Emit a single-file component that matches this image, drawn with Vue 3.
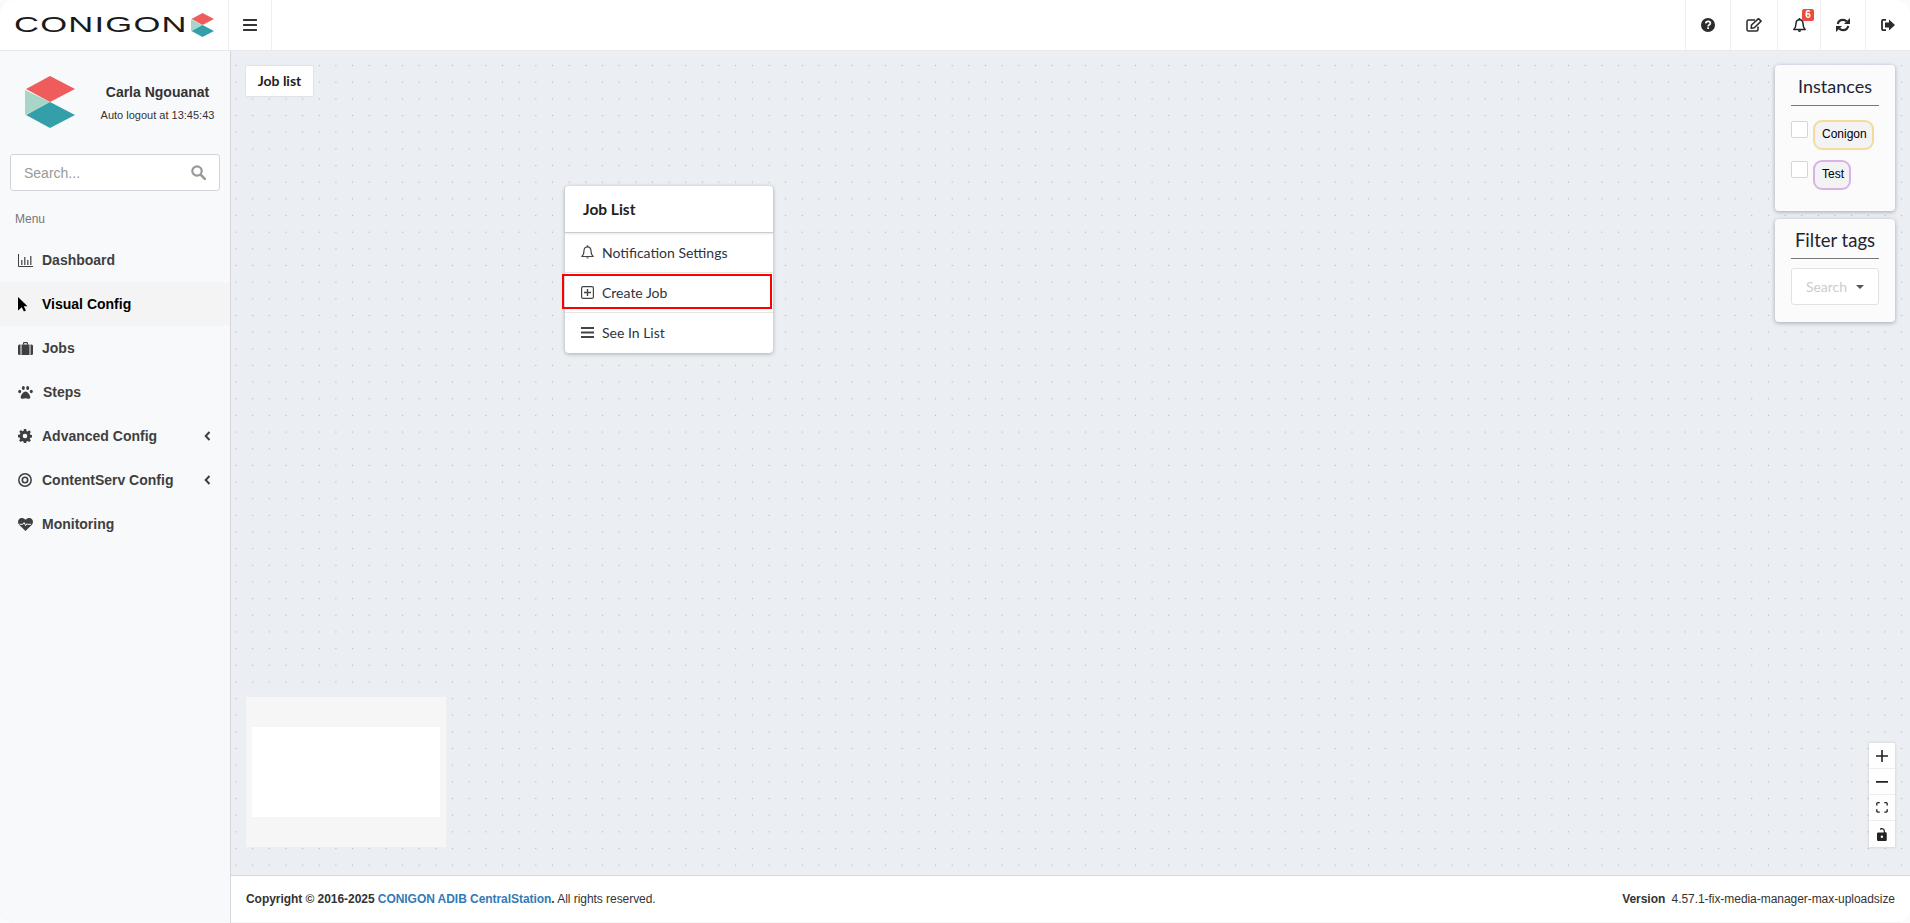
<script setup>
const navItems = [
  { label: 'Dashboard', icon: 'chart' },
  { label: 'Visual Config', icon: 'pointer', active: true },
  { label: 'Jobs', icon: 'suitcase' },
  { label: 'Steps', icon: 'paw', gap: true },
  { label: 'Advanced Config', icon: 'cog', arrow: true },
  { label: 'ContentServ Config', icon: 'target', arrow: true },
  { label: 'Monitoring', icon: 'heart' }
]
const topIcons = [
  { id: 'help', w: 45 },
  { id: 'edit', w: 47 },
  { id: 'bell', w: 43, badge: 6 },
  { id: 'refresh', w: 45 },
  { id: 'logout', w: 45 }
]
</script>

<template>
  <div class="app">
    <svg width="0" height="0" class="defs" aria-hidden="true">
      <defs>
        <symbol id="logo-mark" viewBox="0 0 50 52">
          <path d="M25 0 50 13 25 26 1 13z" fill="#ef5c5c" />
          <path d="M0 14 25 26 0 39z" fill="#a9d5c8" />
          <path d="M25 26 50 39 25 52 1 39z" fill="#33a0a9" />
        </symbol>
      </defs>
    </svg>

    <header class="topbar">
      <div class="brand">
        <span class="wordmark">CONIGON</span>
        <svg class="brand-mark"><use href="#logo-mark" /></svg>
      </div>
      <button class="toggle">
        <svg width="14" height="12" viewBox="0 0 14 12"><path d="M1 0h12.200a.8.8 0 0 1 0 2H.8a.8.8 0 0 1 0-2zm0 5h12.200a.8.8 0 0 1 0 2H.8a.8.8 0 0 1 0-2zm0 5h12.200a.8.8 0 0 1 0 2H.8a.8.8 0 0 1 0-2z" fill="#333" /></svg>
      </button>
      <div class="top-actions">
        <div v-for="t in topIcons" :key="t.id" class="top-action" :style="{ width: t.w + 'px' }">
          <svg v-if="t.id === 'help'" width="14" height="14" viewBox="0 0 14 14">
            <circle cx="7" cy="7" r="7" fill="#2b2b2b" />
            <path d="M4.700 5.300C4.900 4 5.900 3.400 7.100 3.400c1.300 0 2.300.8 2.300 1.900 0 1.800-2.300 1.700-2.300 3.100" fill="none" stroke="#fff" stroke-width="1.700" />
            <rect x="6.200" y="9.300" width="1.800" height="1.700" fill="#fff" />
          </svg>
          <svg v-else-if="t.id === 'edit'" width="16" height="14" viewBox="0 0 16 14">
            <path d="M12 8.500V11.500a1.500 1.500 0 0 1-1.500 1.500H2.500A1.500 1.500 0 0 1 1 11.500v-8A1.500 1.500 0 0 1 2.500 2H9" fill="none" stroke="#2b2b2b" stroke-width="1.500" />
            <path d="M5.500 7 12.500.6l2.600 2.500L8.300 9.800l-3.100.5z" fill="none" stroke="#2b2b2b" stroke-width="1.500" stroke-linejoin="round" />
          </svg>
          <svg v-else-if="t.id === 'bell'" width="13" height="15" viewBox="0 0 13 15">
            <path d="M6.500 1.700C4.200 1.700 3 3.300 3 5.500c0 3-1 4.800-2.200 6h11.400C11 10.300 10 8.500 10 5.500c0-2.200-1.200-3.800-3.500-3.800z" fill="none" stroke="#222" stroke-width="1.500" stroke-linejoin="round" />
            <circle cx="6.500" cy="1" r="1" fill="#222" />
            <path d="M4.800 12.300a1.700 1.700 0 0 0 3.400 0z" fill="#222" />
          </svg>
          <svg v-else-if="t.id === 'refresh'" width="14" height="14" viewBox="0 0 14 14">
            <path d="M1.800 6C2.300 3.500 4.400 1.900 7 1.900c1.500 0 2.800.6 3.700 1.500" fill="none" stroke="#2b2b2b" stroke-width="2.200" />
            <path d="M14 0v6H8z" fill="#2b2b2b" />
            <path d="M12.200 8C11.700 10.500 9.600 12.100 7 12.100c-1.500 0-2.800-.6-3.700-1.500" fill="none" stroke="#2b2b2b" stroke-width="2.200" />
            <path d="M0 14V8h6z" fill="#2b2b2b" />
          </svg>
          <svg v-else width="14" height="12" viewBox="0 0 14 12">
            <path d="M5 .8H2.500A1.500 1.500 0 0 0 1 2.300v7.400a1.500 1.500 0 0 0 1.500 1.500H5" fill="none" stroke="#2b2b2b" stroke-width="1.800" />
            <path d="M8 .5 14 6l-6 5.500V8.500H4v-5h4z" fill="#2b2b2b" />
          </svg>
          <span v-if="t.badge" class="badge">{{ t.badge }}</span>
        </div>
      </div>
    </header>

    <div class="body">
      <aside class="sidebar">
        <div class="user">
          <svg class="user-mark"><use href="#logo-mark" /></svg>
          <div class="user-info">
            <div class="user-name">Carla Ngouanat</div>
            <div class="user-logout">Auto logout at 13:45:43</div>
          </div>
        </div>
        <div class="search">
          <span class="search-ph">Search...</span>
          <svg width="15" height="15" viewBox="0 0 15 15"><circle cx="6" cy="6" r="4.700" fill="none" stroke="#999" stroke-width="2.200" /><path d="m9.600 9.600 4.200 4.200" stroke="#999" stroke-width="2.600" stroke-linecap="round" /></svg>
        </div>
        <div class="menu-label">Menu</div>
        <nav>
          <a v-for="n in navItems" :key="n.label" class="nav-item" :class="{ active: n.active }">
            <span class="nav-icon">
              <svg v-if="n.icon === 'chart'" width="15" height="13" viewBox="0 0 15 13"><path d="M.5 0v12.500H15" fill="none" stroke="currentColor" /><path d="M3 6h1.500v5H3zM6 3h1.500v8H6zM9 6h1.500v5H9zM12 2h1.500v9H12z" fill="currentColor" opacity=".8" /></svg>
              <svg v-else-if="n.icon === 'pointer'" width="10" height="15" viewBox="0 0 10 15"><path d="M0 0 9.500 9.300H5.800l2.100 4.300-2 1-2.100-4.400L0 13.500z" fill="#000" /></svg>
              <svg v-else-if="n.icon === 'suitcase'" width="15" height="13" viewBox="0 0 15 13"><path d="M5 2.500V1.200C5 .5 5.500 0 6.200 0h2.600C9.500 0 10 .5 10 1.200v1.300h-1V1.200H6v1.300z" fill="currentColor" /><path d="M3.500 2.500h8V13h-8zM2.500 2.500V13H1.500A1.500 1.500 0 0 1 0 11.500V4a1.500 1.500 0 0 1 1.500-1.500zM12.500 2.500h1A1.500 1.500 0 0 1 15 4v7.500a1.500 1.500 0 0 1-1.500 1.500h-1z" fill="currentColor" /></svg>
              <svg v-else-if="n.icon === 'paw'" width="15" height="13" viewBox="0 0 15 13"><ellipse cx="5.300" cy="2" rx="1.500" ry="2" fill="currentColor" /><ellipse cx="9.700" cy="2" rx="1.500" ry="2" fill="currentColor" /><ellipse cx="1.700" cy="5.500" rx="1.500" ry="1.800" fill="currentColor" /><ellipse cx="13.300" cy="5.500" rx="1.500" ry="1.800" fill="currentColor" /><path d="M7.500 5.500c2 0 4.800 3.500 4.800 5.800 0 1.500-1.500 1.700-2.300 1.500-1-.2-1.700-.6-2.500-.6s-1.500.4-2.500.6c-.8.2-2.300 0-2.300-1.500 0-2.300 2.800-5.800 4.800-5.800z" fill="currentColor" /></svg>
              <svg v-else-if="n.icon === 'cog'" width="14" height="14" viewBox="0 0 14 14"><path fill-rule="evenodd" d="M5.800 0h2.400l.3 1.900 1.200.5 1.600-1.100 1.600 1.600-1.100 1.600.5 1.200 1.900.3v2.400l-1.900.3-.5 1.200 1.100 1.600-1.600 1.600-1.600-1.100-1.200.5-.3 1.900H5.800l-.3-1.900-1.200-.5-1.600 1.100-1.600-1.600 1.100-1.600-.5-1.200L0 8.200V5.800l1.900-.3.5-1.200-1.100-1.600 1.600-1.600 1.600 1.100 1.200-.5zM7 4.700a2.300 2.300 0 1 0 0 4.600 2.300 2.300 0 0 0 0-4.600z" fill="currentColor" /></svg>
              <svg v-else-if="n.icon === 'target'" width="14" height="14" viewBox="0 0 14 14"><circle cx="7" cy="7" r="6.200" fill="none" stroke="currentColor" stroke-width="1.500" /><circle cx="7" cy="7" r="2.700" fill="none" stroke="currentColor" stroke-width="1.600" /></svg>
              <svg v-else width="15" height="13" viewBox="0 0 15 13"><path fill-rule="evenodd" d="M7.500 13 1.300 7C-.3 5.300-.4 2.800 1 1.200 2.500-.4 5.500-.3 7.500 1.800 9.500-.3 12.500-.4 14 1.200c1.400 1.600 1.300 4.100-.3 5.800z" fill="currentColor" /><path d="M1.500 6.300h3.300l1.300-1.700 1.500 3 1.300-1.900 .6.600h3.500" fill="none" stroke="#f8f9fb" stroke-width="1" /></svg>
            </span>
            <span class="nav-label" :class="{ 'nav-gap': n.gap }">{{ n.label }}</span>
            <svg v-if="n.arrow" class="nav-arrow" width="7" height="10" viewBox="0 0 7 10"><path d="M5.500 1 1.700 5l3.800 4" fill="none" stroke="currentColor" stroke-width="2" /></svg>
          </a>
        </nav>
      </aside>

      <main class="content">
        <div class="canvas">
          <div class="joblist-btn">Job list</div>

          <div class="node">
            <div class="node-head">Job List</div>
            <div class="node-row">
              <svg width="13" height="15" viewBox="0 0 13 15"><path d="M6.500 2C4.200 2 3 3.600 3 5.700c0 3-1 4.700-2.200 5.800h11.400C11 10.400 10 8.700 10 5.700 10 3.600 8.800 2 6.500 2z" fill="none" stroke="#444" stroke-width="1.200" stroke-linejoin="round" /><circle cx="6.500" cy="1.200" r="1" fill="#444" /><path d="M5 12.500a1.600 1.600 0 0 0 3 0z" fill="#444" /></svg>
              <span>Notification Settings</span>
            </div>
            <div class="node-row highlighted">
              <svg width="13" height="13" viewBox="0 0 13 13"><rect x=".6" y=".6" width="11.800" height="11.800" rx="1.500" fill="none" stroke="#444" stroke-width="1.200" /><path d="M6.500 3v7M3 6.500h7" stroke="#444" stroke-width="1.400" /></svg>
              <span>Create Job</span>
            </div>
            <div class="node-row">
              <svg width="13" height="11" viewBox="0 0 13 11"><path d="M0 0h13v2H0zM0 4.500h13v2H0zM0 9h13v2H0z" fill="#444" /></svg>
              <span>See In List</span>
            </div>
          </div>

          <div class="panels">
            <section class="panel instances">
              <h3>Instances</h3>
              <div class="instance">
                <span class="check"></span>
                <span class="chip chip-gold">Conigon</span>
              </div>
              <div class="instance">
                <span class="check"></span>
                <span class="chip chip-purple">Test</span>
              </div>
            </section>
            <section class="panel filter">
              <h3>Filter tags</h3>
              <div class="select">
                <span>Search</span>
                <i class="caret"></i>
              </div>
            </section>
          </div>

          <div class="minimap"><div class="minimap-view"></div></div>

          <div class="controls">
            <button><svg width="12" height="12" viewBox="0 0 32 32"><path d="M32 18.133H18.133V32h-4.266V18.133H0v-4.266h13.867V0h4.266v13.867H32z" /></svg></button>
            <button><svg width="12" height="2" viewBox="0 0 32 5" preserveAspectRatio="none"><path d="M0 0h32v4.200H0z" /></svg></button>
            <button><svg width="12" height="11" viewBox="0 0 32 30"><path d="M3.692 4.630c0-.53.4-.938.939-.938h5.215V0H4.708C2.130 0 0 2.054 0 4.630v5.216h3.692V4.631zM27.354 0h-5.200v3.692h5.170c.53 0 .984.4.984.939v5.215H32V4.631A4.624 4.624 0 0027.354 0zm.954 24.830c0 .532-.4.94-.939.94h-5.215v3.768h5.215c2.577 0 4.631-2.130 4.631-4.707v-5.139h-3.692v5.139zm-23.677.94c-.531 0-.939-.4-.939-.94v-5.138H0v5.139c0 2.577 2.130 4.707 4.708 4.707h5.138V25.770H4.631z" /></svg></button>
            <button><svg width="10" height="13" viewBox="0 0 25 32"><path d="M21.333 10.667H19.810V7.619C19.810 3.429 16.380 0 12.190 0c-1.523 0-3.047.38-4.370 1.238-.762.572-.952 1.524-.38 2.286.571.762 1.523.952 2.285.38a4.230 4.230 0 012.465-.76c2.476 0 4.571 2.095 4.571 4.571v3.048H3.048A3.056 3.056 0 000 13.714v15.238A3.056 3.056 0 003.048 32h18.285a3.056 3.056 0 003.048-3.048V13.714a3.056 3.056 0 00-3.048-3.047zM12.190 24.533a3.056 3.056 0 01-3.047-3.047 3.056 3.056 0 013.047-3.048 3.056 3.056 0 013.048 3.048 3.056 3.056 0 01-3.048 3.047z" /></svg></button>
          </div>
        </div>

        <footer class="footer">
          <div><b>Copyright © 2016-2025 <a>CONIGON ADIB CentralStation</a>.</b> All rights reserved.</div>
          <div><b class="version">Version</b> 4.57.1-fix-media-manager-max-uploadsize</div>
        </footer>
      </main>
    </div>
  </div>
</template>

<style>
html, body { margin: 0; background: #fbfbfb; }
</style>

<style scoped>
.app {
  width: 100%;
  height: 923px;
  display: flex;
  flex-direction: column;
  overflow: hidden;
  border-radius: 14px;
  background: #f8f9fb;
  box-shadow: inset 0 0 2px rgba(0, 0, 0, .08);
  font-family: "Liberation Sans", Arial, sans-serif;
  color: #333;
}
.defs { position: absolute; }
.topbar {
  height: 50px;
  flex: none;
  display: flex;
  background: #fff;
  border-bottom: 1px solid #e8e8ec;
}
.brand {
  width: 229px;
  flex: none;
  display: flex;
  align-items: center;
  padding-left: 14px;
  box-sizing: border-box;
  border-right: 1px solid #eee;
}
.wordmark {
  display: inline-block;
  width: 169px;
  font-size: 22px;
  line-height: 26px;
  letter-spacing: .8px;
  color: #1a1a1a;
  transform: scaleX(1.57);
  transform-origin: left center;
  white-space: nowrap;
}
.brand-mark { width: 23px; height: 26px; margin-left: 8px; }
.toggle {
  width: 43px;
  padding: 0;
  border: 0;
  border-right: 1px solid #eee;
  background: #fff;
  display: flex;
  align-items: center;
  justify-content: center;
}
.top-actions { margin-left: auto; display: flex; }
.top-action {
  position: relative;
  display: flex;
  align-items: center;
  justify-content: center;
  box-sizing: border-box;
  border-left: 1px solid #eee;
}
.badge {
  position: absolute;
  top: 9px;
  left: 24px;
  width: 12px;
  height: 12px;
  border-radius: 2px;
  background: #e74c3c;
  color: #fff;
  font-size: 10px;
  font-weight: 700;
  line-height: 12px;
  text-align: center;
}
.body { flex: 1; display: flex; min-height: 0; }
.sidebar {
  width: 231px;
  flex: none;
  box-sizing: border-box;
  background: #f8f9fb;
  border-right: 1px solid #d5d7df;
}
.user {
  display: flex;
  align-items: center;
  padding: 25px 6px 0 25px;
  height: 52px;
}
.user-mark { width: 50px; height: 52px; flex: none; }
.user-info { flex: 1; text-align: center; padding-left: 16px; }
.user-name { font-size: 14px; font-weight: 700; line-height: 18px; margin-bottom: 7px; }
.user-logout { font-size: 11px; line-height: 14px; white-space: nowrap; }
.search {
  margin: 26px 10px 0;
  height: 37px;
  display: flex;
  align-items: center;
  justify-content: space-between;
  padding: 0 13px 0 13px;
  background: #fff;
  border: 1px solid #d2d4dc;
  border-radius: 3px;
  box-sizing: border-box;
}
.search-ph { font-size: 14px; color: #999; }
.menu-label { margin: 20px 0 0 15px; font-size: 12px; line-height: 16px; color: #777; }
nav { margin-top: 11px; display: flex; flex-direction: column; }
.nav-item {
  height: 44px;
  display: flex;
  align-items: center;
  padding-left: 18px;
  color: #3f3f3f;
  font-size: 14px;
  font-weight: 700;
}
.nav-item.active { background: #f4f4f4; color: #000; }
.nav-icon { width: 24px; display: flex; align-items: center; flex: none; }
.nav-gap { margin-left: 1px; }
.nav-arrow { margin-left: auto; margin-right: 19px; }
.content { flex: 1; min-width: 0; display: flex; flex-direction: column; }
.canvas {
  position: relative;
  flex: 1;
  min-height: 0;
  background-color: #ebeef3;
  background-image: radial-gradient(circle, #b4b6bb .7px, transparent 1px);
  background-size: 16.67px 16.67px;
  background-position: -3.33px 6.3px;
}
.joblist-btn {
  position: absolute;
  left: 14px;
  top: 14px;
  width: 69px;
  height: 32px;
  box-sizing: border-box;
  background: #fff;
  border: 1px solid #e2e2e6;
  border-radius: 2px;
  font: 700 14px/29px Lato, sans-serif;
  color: #222;
  text-align: center;
}
.node {
  position: absolute;
  left: 334px;
  top: 135px;
  width: 208px;
  background: #fff;
  border-radius: 4px;
  box-shadow: 0 1px 4px rgba(0, 0, 0, .28);
  font-family: Lato, sans-serif;
  color: #2d3340;
}
.node-head {
  height: 47px;
  box-sizing: border-box;
  padding-left: 18px;
  font-size: 15.500px;
  font-weight: 700;
  line-height: 46px;
  color: #222;
  border-bottom: 1px solid #ccc;
  box-shadow: 0 1px 2px rgba(0, 0, 0, .1);
}
.node-row {
  position: relative;
  height: 40px;
  box-sizing: border-box;
  display: flex;
  align-items: center;
  gap: 8px;
  padding-left: 16px;
  font-size: 14px;
  border-bottom: 1px solid #e6e6e6;
}
.node-row:last-child { border-bottom: 0; padding-bottom: 1px; }
.node-row svg { flex: none; width: 13px; }
.highlighted::after {
  content: "";
  position: absolute;
  left: -3px;
  right: 1px;
  top: 1px;
  height: 35px;
  box-sizing: border-box;
  border: 2px solid #f00;
}
.panels {
  position: absolute;
  right: 15px;
  top: 14px;
  width: 120px;
  display: flex;
  flex-direction: column;
  gap: 8px;
}
.panel {
  box-sizing: border-box;
  padding: 0 16px;
  background: #fbfbfb;
  border-radius: 4px;
  box-shadow: 0 1px 4px rgba(30, 30, 60, .35);
  font-family: Lato, sans-serif;
}
.instances { height: 146px; }
.filter { height: 103px; }
.panel h3 {
  margin: 0;
  height: 41px;
  box-sizing: border-box;
  border-bottom: 1px solid #777;
  font-size: 18px;
  font-weight: 400;
  line-height: 42px;
  text-align: center;
  color: #1d2433;
  white-space: nowrap;
}
.filter h3 { font-size: 18.500px; height: 40px; }
.instances h3 + .instance { margin-top: 14px; }
.instance { display: flex; align-items: flex-start; margin-bottom: 10px; height: 30px; }
.check {
  width: 17px;
  height: 17px;
  flex: none;
  margin: 1px 5px 0 0;
  box-sizing: border-box;
  background: #fff;
  border: 1px solid #d5d5d5;
  border-radius: 2px;
}
.chip {
  height: 30px;
  box-sizing: border-box;
  padding: 0 5px 0 7px;
  border-radius: 9px;
  background: #f3f3f3;
  font: 12px/24px "Liberation Sans", sans-serif;
  color: #000;
}
.chip-gold { border: 2px solid #f3dba0; }
.chip-purple { border: 2px solid #d9b3e3; }
.select {
  margin-top: 9px;
  height: 37px;
  box-sizing: border-box;
  display: flex;
  align-items: center;
  justify-content: center;
  gap: 9px;
  background: #fff;
  border: 1px solid #e2e2e2;
  border-radius: 3px;
  color: #ccc;
  font-size: 14px;
}
.caret {
  width: 0;
  height: 0;
  border-left: 4px solid transparent;
  border-right: 4px solid transparent;
  border-top: 4px solid #555;
}
.minimap {
  position: absolute;
  left: 15px;
  bottom: 28px;
  width: 200px;
  height: 150px;
  display: flex;
  align-items: center;
  justify-content: center;
  background: #f6f6f6;
}
.minimap-view { width: 188px; height: 90px; background: #fff; }
.controls {
  position: absolute;
  right: 15px;
  bottom: 28px;
  width: 26px;
  display: flex;
  flex-direction: column;
  box-shadow: 0 0 2px 1px rgba(0, 0, 0, .08);
}
.controls button {
  width: 26px;
  height: 26px;
  padding: 0;
  display: flex;
  align-items: center;
  justify-content: center;
  background: #fefefe;
  border: 0;
  border-bottom: 1px solid #eee;
  box-sizing: border-box;
}
.controls button:last-child { border-bottom: 0; }
.controls svg { fill: #222; }
.footer {
  height: 47px;
  margin-bottom: 1px;
  flex: none;
  box-sizing: border-box;
  display: flex;
  align-items: center;
  justify-content: space-between;
  padding: 0 15px;
  background: #fff;
  border-top: 1px solid #d5d7df;
  font-size: 12px;
  letter-spacing: -.05px;
  color: #333;
}
.footer a { color: #337ab7; }
.version { margin-right: 3px; }
</style>
